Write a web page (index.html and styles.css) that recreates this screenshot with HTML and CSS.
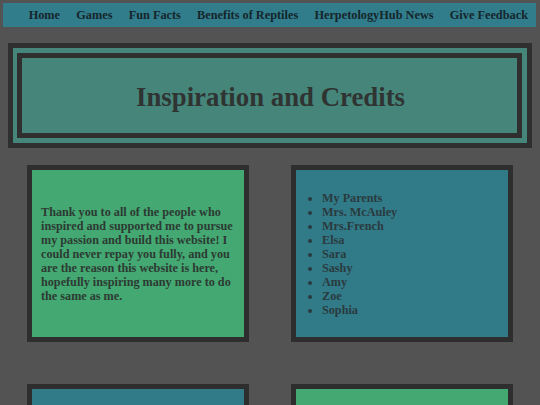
FILE: index.html
```html
<!DOCTYPE html>
<html lang="en">
<head>
<meta charset="utf-8">
<title>Inspiration and Credits</title>
<link rel="stylesheet" href="styles.css">
</head>
<body>
<nav class="topnav">
  <a href="#">Home</a>
  <a href="#">Games</a>
  <a href="#">Fun Facts</a>
  <a href="#">Benefits of Reptiles</a>
  <a href="#">HerpetologyHub News</a>
  <a href="#">Give Feedback</a>
</nav>
<header class="banner">
  <div class="banner-inner">
    <h1>Inspiration and Credits</h1>
  </div>
</header>
<main class="grid">
  <section class="card green">
    <p>Thank you to all of the people who inspired and supported me to pursue my passion and build this website! I could never repay you fully, and you are the reason this website is here, hopefully inspiring many more to do the same as me.</p>
  </section>
  <section class="card blue">
    <ul>
      <li>My Parents</li>
      <li>Mrs. McAuley</li>
      <li>Mrs.French</li>
      <li>Elsa</li>
      <li>Sara</li>
      <li>Sashy</li>
      <li>Amy</li>
      <li>Zoe</li>
      <li>Sophia</li>
    </ul>
  </section>
  <section class="card blue"></section>
  <section class="card green"></section>
</main>
</body>
</html>
```
FILE: styles.css
```css
html, body {
  margin: 0;
  padding: 0;
}
body {
  background: #535353;
  font-family: "Liberation Serif", "Times New Roman", serif;
  font-weight: bold;
  color: #2e3a36;
  padding: 3px 4px 0 3px;
  overflow: hidden;
  height: 402px;
}
.topnav {
  display: flex;
  justify-content: flex-end;
  align-items: center;
  height: 24px;
  background: #327d8b;
}
.topnav a {
  flex: none;
  white-space: nowrap;
  color: #14262c;
  text-decoration: none;
  font-size: 12.3px;
  padding: 0 8.1px;
  line-height: 24px;
}
.topnav a:last-child {
  padding-right: 8px;
}
.banner {
  margin: 16px 4px 0 5px;
  border: 5px solid #2f2f2f;
  background: #46867a;
  padding: 5px 5px 5px 4px;
}
.banner-inner {
  border: 5px solid #2f2f2f;
  height: 75px;
  display: flex;
  align-items: center;
  justify-content: center;
}
.banner h1 {
  margin: 0 0 0 2px;
  font-size: 26.8px;
  color: #2f3432;
  padding-top: 3px;
}
.grid {
  display: grid;
  grid-template-columns: 222px 222px;
  column-gap: 42px;
  row-gap: 42px;
  margin: 17px 0 0 24px;
}
.card {
  box-sizing: border-box;
  height: 177px;
  border: 5px solid #2e2e2e;
  display: flex;
  align-items: center;
}
.green {
  background: #44a872;
}
.blue {
  background: #317a88;
}
.card p {
  margin: 0;
  padding: 0 9px;
  font-size: 12.2px;
  line-height: 14px;
  color: #2c3a33;
}
.card ul {
  margin: 0;
  padding: 0 0 0 26px;
  font-size: 12.2px;
  line-height: 14px;
  color: #2a3a3e;
}
```
